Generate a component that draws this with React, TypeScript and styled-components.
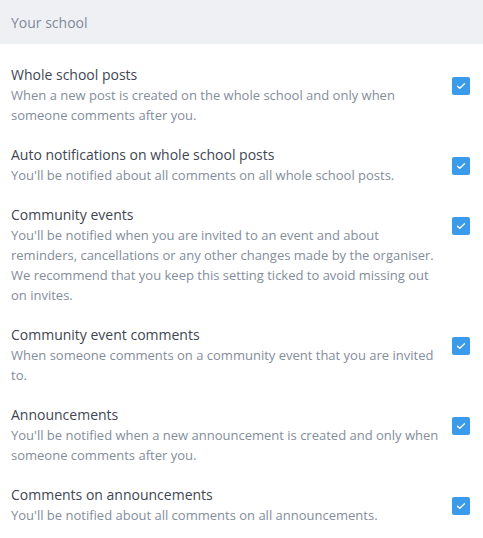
import React from "react";
import styled, { createGlobalStyle } from "styled-components";

const Global = createGlobalStyle`
  html, body { margin: 0; padding: 0; background: #ffffff; }
  body { font-family: "Open Sans", "Liberation Sans", sans-serif; -webkit-font-smoothing: antialiased; }
`;

const Panel = styled.section`
  width: 483px;
  background: #ffffff;
`;

const Header = styled.header`
  height: 44px;
  box-sizing: border-box;
  padding: 0 11px;
  display: flex;
  align-items: center;
  background: #eff0f4;
  color: #7f899a;
  font-size: 14px;
`;

const List = styled.div`
  display: flex;
  flex-direction: column;
  gap: 20px;
  padding: 21px 13px 0 11px;
`;

const Row = styled.label`
  display: flex;
  align-items: flex-start;
  justify-content: space-between;
  gap: 12px;
`;

const Texts = styled.div`
  flex: 1;
  max-width: 432px;
`;

const Title = styled.div`
  font-size: 14px;
  line-height: 20px;
  color: #3e4653;
`;

const Desc = styled.div`
  font-size: 13px;
  line-height: 20px;
  color: #838d9c;
`;

const Box = styled.span`
  flex: none;
  width: 18px;
  height: 18px;
  margin-top: 12px;
  border-radius: 2px;
  background: #3c9aea;
  display: flex;
  align-items: center;
  justify-content: center;
`;

const items = [
  {
    title: "Whole school posts",
    desc: "When a new post is created on the whole school and only when someone comments after you.",
  },
  {
    title: "Auto notifications on whole school posts",
    desc: "You'll be notified about all comments on all whole school posts.",
  },
  {
    title: "Community events",
    desc: "You'll be notified when you are invited to an event and about reminders, cancellations or any other changes made by the organiser. We recommend that you keep this setting ticked to avoid missing out on invites.",
  },
  {
    title: "Community event comments",
    desc: "When someone comments on a community event that you are invited to.",
  },
  {
    title: "Announcements",
    desc: "You'll be notified when a new announcement is created and only when someone comments after you.",
  },
  {
    title: "Comments on announcements",
    desc: "You'll be notified about all comments on all announcements.",
  },
];

const Check = () => (
  <Box>
    <svg width="10" height="8" viewBox="0 0 10 8" fill="none">
      <path d="M1.5 4.2 L3.8 6.3 L8.5 1.7" stroke="#ffffff" strokeWidth="1.3" strokeLinecap="round" strokeLinejoin="round" />
    </svg>
  </Box>
);

export default function App() {
  return (
    <>
      <Global />
      <Panel>
        <Header>Your school</Header>
        <List>
          {items.map((it) => (
            <Row key={it.title}>
              <Texts>
                <Title>{it.title}</Title>
                <Desc>{it.desc}</Desc>
              </Texts>
              <Check />
            </Row>
          ))}
        </List>
      </Panel>
    </>
  );
}
